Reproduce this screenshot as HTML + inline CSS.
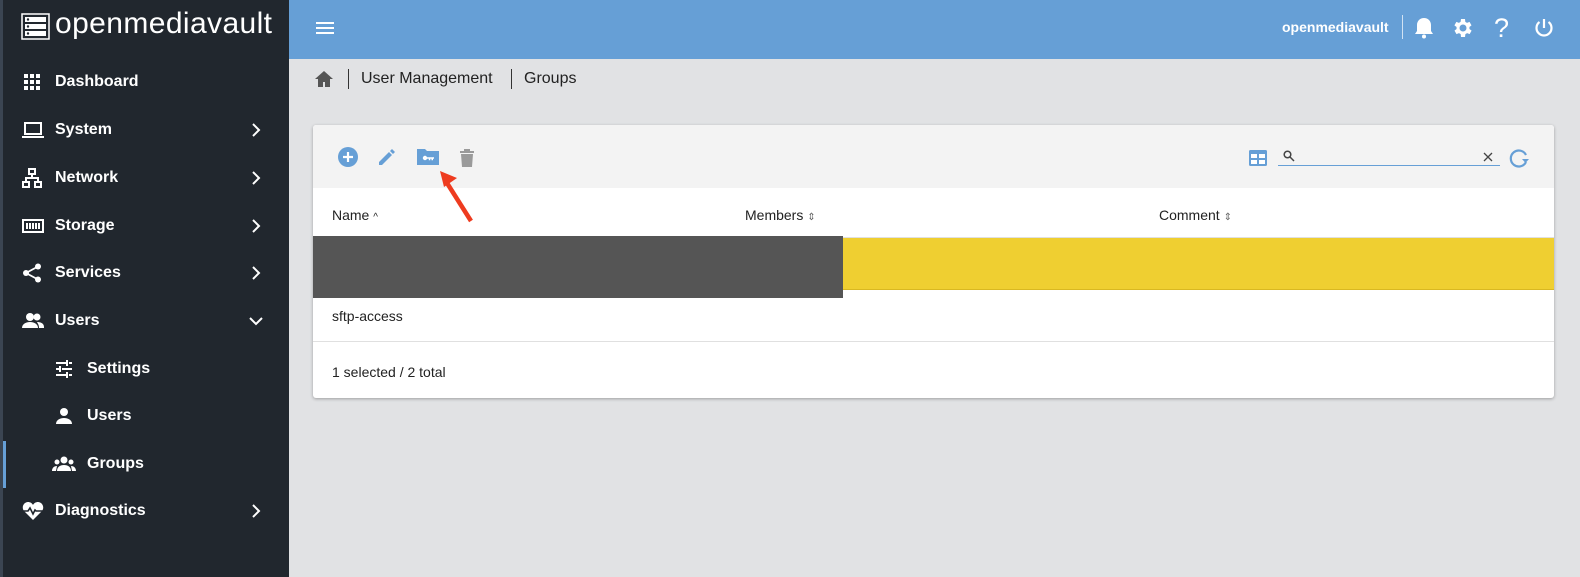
<!DOCTYPE html>
<html><head><style>
*{box-sizing:border-box;margin:0;padding:0}
body{width:1580px;height:577px;overflow:hidden;background:#e1e2e4;font-family:"Liberation Sans",sans-serif;position:relative}
.sb{position:absolute;left:0;top:0;width:289px;height:577px;background:#21272e;color:#fff}
.strip{position:absolute;left:0;top:0;width:3px;height:577px;background:#3b4552}
.logo{position:absolute;left:21px;top:10px;font-size:30px;color:#fff;letter-spacing:0.4px}
.item{position:absolute;left:0;height:48px;width:289px;display:flex;align-items:center;font-size:16px;font-weight:bold}
.item svg{position:absolute;left:22px}
.item .t{position:absolute;left:55px}
.item .ch{position:absolute;left:246px;top:14px}
.sub .t{left:87px}.sub svg{left:54px}
.top{position:absolute;left:289px;top:0;right:0;height:59px;background:#669fd6;color:#fff}
.card{position:absolute;left:313px;top:125px;width:1241px;height:273px;background:#fff;border-radius:3px;box-shadow:0 1px 3px rgba(0,0,0,.3);overflow:hidden}
.tb{height:63px;background:#f3f3f3}
.hd{position:absolute;top:82px;font-size:14px;color:#222}
</style></head><body>
<div class="sb">
<div class="strip"></div>
<div style="position:absolute;left:3px;top:441px;width:3px;height:47px;background:#669fd6"></div>
<svg style="position:absolute;left:21px;top:13px" width="29" height="27" viewBox="0 0 29 27"><rect x="1" y="1" width="27" height="25" fill="none" stroke="#fff" stroke-width="1.5"/><rect x="4" y="4" width="21" height="5" fill="#fff"/><rect x="4" y="11" width="21" height="5" fill="#fff"/><rect x="4" y="18" width="21" height="5" fill="#fff"/><circle cx="7" cy="6.5" r="1.2" fill="#21272e"/><circle cx="7" cy="13.5" r="1.2" fill="#21272e"/><circle cx="7" cy="20.5" r="1.2" fill="#21272e"/></svg>
<div class="logo" style="left:55px;top:7px">openmediavault</div>
<div class="item" style="top:58px"><svg width="20" height="20" viewBox="0 0 20 20" fill="#fff"><rect x="2" y="2" width="4" height="4"/><rect x="8" y="2" width="4" height="4"/><rect x="14" y="2" width="4" height="4"/><rect x="2" y="8" width="4" height="4"/><rect x="8" y="8" width="4" height="4"/><rect x="14" y="8" width="4" height="4"/><rect x="2" y="14" width="4" height="4"/><rect x="8" y="14" width="4" height="4"/><rect x="14" y="14" width="4" height="4"/></svg><span class="t">Dashboard</span></div>
<div class="item" style="top:106px"><svg width="22" height="20" viewBox="0 0 22 20"><rect x="3" y="3" width="16" height="11" fill="none" stroke="#fff" stroke-width="2"/><rect x="0" y="16" width="22" height="2" fill="#fff"/></svg><span class="t">System</span><svg class="ch" width="20" height="20" viewBox="0 0 20 20"><path d="M7 4l6 6-6 6" stroke="#fff" stroke-width="2" fill="none"/></svg></div>
<div class="item" style="top:154px"><svg width="20" height="20" viewBox="0 0 20 20" fill="none" stroke="#fff" stroke-width="2"><rect x="7" y="1" width="6" height="5"/><rect x="1" y="14" width="6" height="5"/><rect x="13" y="14" width="6" height="5"/><path d="M10 6v4M4 14v-4h12v4"/></svg><span class="t">Network</span><svg class="ch" width="20" height="20" viewBox="0 0 20 20"><path d="M7 4l6 6-6 6" stroke="#fff" stroke-width="2" fill="none"/></svg></div>
<div class="item" style="top:202px"><svg width="22" height="20" viewBox="0 0 22 20"><rect x="1" y="4" width="20" height="12" fill="none" stroke="#fff" stroke-width="2"/><path d="M5 7v6M8 7v6M11 7v6M14 7v6M17 7v6" stroke="#fff" stroke-width="2"/></svg><span class="t">Storage</span><svg class="ch" width="20" height="20" viewBox="0 0 20 20"><path d="M7 4l6 6-6 6" stroke="#fff" stroke-width="2" fill="none"/></svg></div>
<div class="item" style="top:249px"><svg width="20" height="20" viewBox="0 0 20 20" fill="#fff"><circle cx="16" cy="3.5" r="3"/><circle cx="4" cy="10" r="3"/><circle cx="16" cy="16.5" r="3"/><path d="M16 3.5L4 10l12 6.5" stroke="#fff" stroke-width="1.8" fill="none"/></svg><span class="t">Services</span><svg class="ch" width="20" height="20" viewBox="0 0 20 20"><path d="M7 4l6 6-6 6" stroke="#fff" stroke-width="2" fill="none"/></svg></div>
<div class="item" style="top:297px"><svg width="22" height="20" viewBox="0 0 22 20" fill="#fff"><circle cx="8" cy="6" r="4"/><circle cx="15" cy="6" r="3.5"/><path d="M0 17c0-4 4-6 8-6s8 2 8 6z"/><path d="M15 11c3 0 7 1 7 5v1h-5c0-3-1-4-2-6z"/></svg><span class="t">Users</span><svg class="ch" width="20" height="20" viewBox="0 0 20 20"><path d="M4 7l6 6 6-6" stroke="#fff" stroke-width="2" fill="none"/></svg></div>
<div class="item sub" style="top:345px"><svg width="20" height="20" viewBox="0 0 20 20" stroke="#fff" stroke-width="2"><path d="M2 4h10M15 4h3M13 1v6M2 10h3M8 10h10M6 7v6M2 16h10M15 16h3M13 13v6"/></svg><span class="t">Settings</span></div>
<div class="item sub" style="top:392px"><svg width="20" height="20" viewBox="0 0 20 20" fill="#fff"><circle cx="10" cy="6" r="4"/><path d="M2 18c0-4 4-6 8-6s8 2 8 6z"/></svg><span class="t">Users</span></div>
<div class="item sub" style="top:440px"><svg width="24" height="20" viewBox="0 0 24 20" fill="#fff" style="left:52px"><circle cx="12" cy="6" r="3.5"/><circle cx="5" cy="8" r="2.5"/><circle cx="19" cy="8" r="2.5"/><path d="M5 17c0-4 3-6 7-6s7 2 7 6z"/><path d="M0 17c0-3 2-5 5-5l-1 5zM24 17c0-3-2-5-5-5l1 5z"/></svg><span class="t">Groups</span></div>
<div class="item" style="top:487px"><svg width="22" height="20" viewBox="0 0 22 20" fill="#fff"><path d="M11 19L2 10C-1 6 2 1 6 1c2 0 4 1 5 3 1-2 3-3 5-3 4 0 7 5 4 9z"/><path d="M1 10h5l2-3 3 6 2-4 1 1h7" stroke="#21272e" stroke-width="1.6" fill="none"/></svg><span class="t">Diagnostics</span><svg class="ch" width="20" height="20" viewBox="0 0 20 20"><path d="M7 4l6 6-6 6" stroke="#fff" stroke-width="2" fill="none"/></svg></div>
</div>
<div class="top">
<svg style="position:absolute;left:26px;top:19px" width="20" height="18" viewBox="0 0 20 18" fill="#fff"><rect x="1" y="3" width="18" height="2"/><rect x="1" y="8" width="18" height="2"/><rect x="1" y="13" width="18" height="2"/></svg>
<div style="position:absolute;left:993px;top:19px;font-size:14px;font-weight:bold">openmediavault</div>
<div style="position:absolute;left:1113px;top:15px;width:1px;height:24px;background:#fff;opacity:.7"></div>
<svg style="position:absolute;left:1124px;top:16px" width="22" height="24" viewBox="0 0 22 24" fill="#fff"><path d="M11 2c-4 0-7 3-7 7v6l-2 3h18l-2-3V9c0-4-3-7-7-7z"/><circle cx="11" cy="20.5" r="2"/></svg>
<svg style="position:absolute;left:1162px;top:16px" width="24" height="24" viewBox="0 0 24 24" fill="#fff"><path d="M19.4 13a7.5 7.5 0 000-2l2.1-1.6-2-3.5-2.5 1a7 7 0 00-1.7-1L15 3h-4l-.4 2.9a7 7 0 00-1.7 1l-2.5-1-2 3.5L6.6 11a7.5 7.5 0 000 2l-2.1 1.6 2 3.5 2.5-1a7 7 0 001.7 1L11 21h4l.4-2.9a7 7 0 001.7-1l2.5 1 2-3.5zM13 15.5a3.5 3.5 0 110-7 3.5 3.5 0 010 7z" transform="translate(-1 0)"/></svg>
<div style="position:absolute;left:1205px;top:13px;font-size:27px">?</div>
<svg style="position:absolute;left:1244px;top:17px" width="22" height="22" viewBox="0 0 22 22" fill="none" stroke="#fff" stroke-width="2.2"><path d="M11 2v9"/><path d="M6.5 5a7.5 7.5 0 109 0"/></svg>
</div>
<svg style="position:absolute;left:314px;top:70px" width="20" height="18" viewBox="0 0 20 18" fill="#555"><path d="M10 1L1 9h3v8h5v-5h2v5h5V9h3z"/></svg>
<div style="position:absolute;left:348px;top:69px;width:1px;height:20px;background:#333"></div>
<div style="position:absolute;left:361px;top:70px;font-size:16px;color:#222">User Management</div>
<div style="position:absolute;left:511px;top:69px;width:1px;height:20px;background:#333"></div>
<div style="position:absolute;left:524px;top:70px;font-size:16px;color:#222">Groups</div>
<div class="card">
<div class="tb"></div>
<svg style="position:absolute;left:25px;top:22px" width="20" height="20" viewBox="0 0 20 20"><circle cx="10" cy="10" r="10" fill="#669fd6"/><path d="M10 5v10M5 10h10" stroke="#fff" stroke-width="2.2"/></svg>
<svg style="position:absolute;left:64px;top:22px" width="20" height="20" viewBox="0 0 20 20" fill="#669fd6"><path d="M2 15v3h3L15 8l-3-3zM13 4l3 3 2-2-3-3z"/></svg>
<svg style="position:absolute;left:104px;top:22px" width="22" height="18" viewBox="0 0 22 18" fill="#669fd6"><path d="M0 2h8l2 2h12v14H0z"/><circle cx="8" cy="11" r="2.2" fill="#fff"/><path d="M10 10.2h7v1.6h-1v1.5h-1.5v-1.5h-1.2v1.5H11.8v-1.5H10z" fill="#fff"/></svg>
<svg style="position:absolute;left:145px;top:22px" width="18" height="20" viewBox="0 0 18 20" fill="#9a9a9a"><path d="M2 4h14v2H2zM6 2h6v2H6zM3 7h12l-1 13H4z"/></svg>
<svg style="position:absolute;left:126px;top:44px" width="36" height="56" viewBox="0 0 36 56"><path d="M32 52L8 14" stroke="#ee3b1f" stroke-width="4.5"/><path d="M1 2l17 7-13 9z" fill="#ee3b1f"/></svg>
<svg style="position:absolute;left:936px;top:25px" width="18" height="16" viewBox="0 0 18 16" fill="#669fd6"><rect width="18" height="16" rx="1.5"/><path d="M2 4h6v4H2zM10 4h6v4h-6zM2 10h6v4H2zM10 10h6v4h-6z" fill="#fff"/></svg>
<svg style="position:absolute;left:970px;top:25px" width="12" height="12" viewBox="0 0 12 12" fill="none" stroke="#444" stroke-width="1.5"><circle cx="4.5" cy="4.5" r="3.3"/><path d="M7 7l4 4"/></svg>
<div style="position:absolute;left:965px;top:40px;width:222px;height:1px;background:#669fd6"></div>
<svg style="position:absolute;left:1170px;top:27px" width="10" height="10" viewBox="0 0 10 10" stroke="#444" stroke-width="1.3"><path d="M1 1l8 8M9 1l-8 8"/></svg>
<svg style="position:absolute;left:1195px;top:22px" width="22" height="22" viewBox="0 0 22 22" fill="none" stroke="#669fd6" stroke-width="2.2"><path d="M18 8a8 8 0 10-0 7"/><path d="M14 12h7l-3.5 4z" fill="#669fd6" stroke="none"/></svg>
<div class="hd" style="left:19px">Name <span style="font-size:10px">^</span></div>
<div class="hd" style="left:432px">Members <span style="font-size:10px;color:#666">⇕</span></div>
<div class="hd" style="left:846px">Comment <span style="font-size:10px;color:#666">⇕</span></div>
<div style="position:absolute;left:0;top:112px;width:100%;height:1px;background:#e0e0e0"></div>
<div style="position:absolute;left:0;top:113px;width:100%;height:52px;background:#efcf31;border-bottom:1px solid #d9b821"></div>
<div style="position:absolute;left:0;top:111px;width:530px;height:62px;background:#555"></div>
<div style="position:absolute;left:19px;top:183px;font-size:14px;color:#222">sftp-access</div>
<div style="position:absolute;left:0;top:216px;width:100%;height:1px;background:#e0e0e0"></div>
<div style="position:absolute;left:19px;top:239px;font-size:14px;color:#222">1 selected / 2 total</div>
</div>
</body></html>
